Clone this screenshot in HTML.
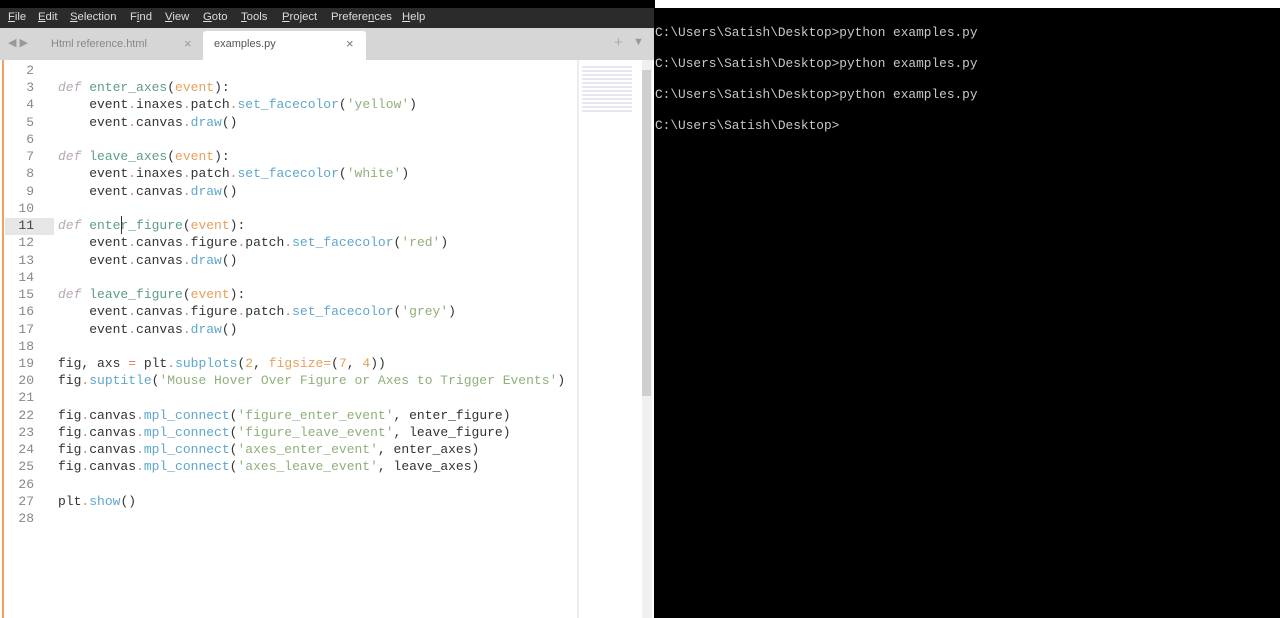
<!DOCTYPE html><html><head><style>
body{margin:0;width:1280px;height:618px;overflow:hidden;background:#000;position:relative;font-family:"Liberation Sans",sans-serif}
.abs{position:absolute}
#menu{left:0;top:8px;width:654px;height:20px;background:#2b2b2b;color:#ddd;font-size:11.3px}
#menu span{position:absolute;top:3px}
#tabs{left:0;top:28px;width:654px;height:32px;background:#d6d6d6}
#ed{left:0;top:60px;width:654px;height:558px;background:#fff}
.code{position:absolute;left:0;top:62px;font-family:"Liberation Mono",monospace;font-size:13px;line-height:17.23px;white-space:pre;color:#333}
.d{color:#b7a7b7;font-style:italic}.f{color:#5d9c8e}.p{color:#e5a05b}.o{color:#e08060}.m{color:#5fa7cc}.s{color:#8fb07a}
#term{left:655px;top:10px;width:625px;height:608px;background:#000;color:#c8c8c8;font-family:"Liberation Mono",monospace;font-size:12.8px;line-height:15.45px;white-space:pre}
</style></head><body>
<div class="abs" style="left:655px;top:0;width:625px;height:8px;background:#fff"></div>
<div class="abs" style="left:655px;top:8px;width:625px;height:610px;background:#000"></div>
<div id="menu" class="abs"><span style="left:8px"><u>F</u>ile</span><span style="left:38px"><u>E</u>dit</span><span style="left:70px"><u>S</u>election</span><span style="left:130px">F<u>i</u>nd</span><span style="left:165px"><u>V</u>iew</span><span style="left:203px"><u>G</u>oto</span><span style="left:241px"><u>T</u>ools</span><span style="left:282px"><u>P</u>roject</span><span style="left:331px">Prefere<u>n</u>ces</span><span style="left:402px"><u>H</u>elp</span></div>
<div id="tabs" class="abs">
<span class="abs" style="left:8px;top:8px;color:#999;font-size:11px">◀ ▶</span>
<span class="abs" style="left:51px;top:10px;color:#888;font-size:11px">Html reference.html</span>
<span class="abs" style="left:184px;top:8px;color:#999;font-size:13px">×</span>
<div class="abs" style="left:203px;top:3px;width:163px;height:29px;background:#fff;border-radius:3px 3px 0 0"></div>
<span class="abs" style="left:214px;top:10px;color:#555;font-size:11px">examples.py</span>
<span class="abs" style="left:346px;top:8px;color:#777;font-size:13px">×</span>
<span class="abs" style="left:614px;top:6px;color:#aaa;font-size:15px">+</span>
<span class="abs" style="left:633px;top:8px;color:#999;font-size:11px">▼</span>
</div>
<div id="ed" class="abs">
<div class="abs" style="left:2px;top:0;width:2px;height:558px;background:#f0a060"></div>
<div class="abs" style="left:5px;top:158px;width:49px;height:17px;background:#e6e6e6"></div>
<div class="abs" style="left:577px;top:0;width:2px;height:558px;background:#ececec"></div>
<div class="abs" style="left:642px;top:0;width:10px;height:558px;background:#f0f0f0"></div>
<div class="abs" style="left:642px;top:10px;width:9px;height:326px;background:#cfcfcf"></div>
<div class="abs" style="left:582px;top:4px;width:50px;height:50px;background:repeating-linear-gradient(#fff 0 2px,#dde 2px 4px);opacity:.7"></div>
</div>
<div class="code" style="left:0;width:40px"><div style="width:34px;text-align:right;color:#888">2
3
4
5
6
7
8
9
10
<span style="color:#444">11</span>
12
13
14
15
16
17
18
19
20
21
22
23
24
25
26
27
28</div></div>
<div class="code" style="left:58px">
<span class="d">def</span> <span class="f">enter_axes</span>(<span class="p">event</span>):
    event<span class="o">.</span>inaxes<span class="o">.</span>patch<span class="o">.</span><span class="m">set_facecolor</span>(<span class="s">'yellow'</span>)
    event<span class="o">.</span>canvas<span class="o">.</span><span class="m">draw</span>()

<span class="d">def</span> <span class="f">leave_axes</span>(<span class="p">event</span>):
    event<span class="o">.</span>inaxes<span class="o">.</span>patch<span class="o">.</span><span class="m">set_facecolor</span>(<span class="s">'white'</span>)
    event<span class="o">.</span>canvas<span class="o">.</span><span class="m">draw</span>()

<span class="d">def</span> <span class="f">enter_figure</span>(<span class="p">event</span>):
    event<span class="o">.</span>canvas<span class="o">.</span>figure<span class="o">.</span>patch<span class="o">.</span><span class="m">set_facecolor</span>(<span class="s">'red'</span>)
    event<span class="o">.</span>canvas<span class="o">.</span><span class="m">draw</span>()

<span class="d">def</span> <span class="f">leave_figure</span>(<span class="p">event</span>):
    event<span class="o">.</span>canvas<span class="o">.</span>figure<span class="o">.</span>patch<span class="o">.</span><span class="m">set_facecolor</span>(<span class="s">'grey'</span>)
    event<span class="o">.</span>canvas<span class="o">.</span><span class="m">draw</span>()

fig, axs <span class="o">=</span> plt<span class="o">.</span><span class="m">subplots</span>(<span class="p">2</span>, <span class="p">figsize=</span>(<span class="p">7</span>, <span class="p">4</span>))
fig<span class="o">.</span><span class="m">suptitle</span>(<span class="s">'Mouse Hover Over Figure or Axes to Trigger Events'</span>)

fig<span class="o">.</span>canvas<span class="o">.</span><span class="m">mpl_connect</span>(<span class="s">'figure_enter_event'</span>, enter_figure)
fig<span class="o">.</span>canvas<span class="o">.</span><span class="m">mpl_connect</span>(<span class="s">'figure_leave_event'</span>, leave_figure)
fig<span class="o">.</span>canvas<span class="o">.</span><span class="m">mpl_connect</span>(<span class="s">'axes_enter_event'</span>, enter_axes)
fig<span class="o">.</span>canvas<span class="o">.</span><span class="m">mpl_connect</span>(<span class="s">'axes_leave_event'</span>, leave_axes)

plt<span class="o">.</span><span class="m">show</span>()
</div>
<div class="abs" style="left:121px;top:216px;width:1px;height:18px;background:#333"></div>
<div id="term" class="abs">
C:\Users\Satish\Desktop>python examples.py

C:\Users\Satish\Desktop>python examples.py

C:\Users\Satish\Desktop>python examples.py

C:\Users\Satish\Desktop></div>
</body></html>
